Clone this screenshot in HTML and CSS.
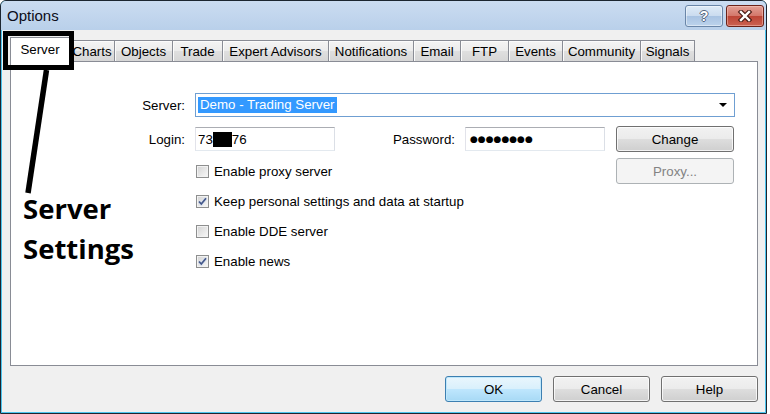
FILE: index.html
```html
<!DOCTYPE html>
<html>
<head>
<meta charset="utf-8">
<title>Options</title>
<link rel="stylesheet" href="styles.css">
</head>
<body>
<div class="window">
  <div class="titlebar">
    <span class="title">Options</span>
    <div class="caption-buttons">
      <div class="cap-btn cap-help"><span class="cap-q">?</span></div>
      <div class="cap-btn cap-close">
        <svg width="16" height="12" viewBox="0 0 16 12">
          <path d="M4 2 L12 10 M12 2 L4 10" stroke="#4a1c16" stroke-width="4.6" stroke-linecap="square" fill="none"/>
          <path d="M4 2 L12 10 M12 2 L4 10" stroke="#ffffff" stroke-width="2.4" stroke-linecap="square" fill="none"/>
        </svg>
      </div>
    </div>
  </div>
  <div class="client">
    <div class="tabs">
      <div class="tab tab-active">Server</div>
      <div class="tab tab-charts">Charts</div>
      <div class="tab tab-objects">Objects</div>
      <div class="tab tab-trade">Trade</div>
      <div class="tab tab-expert">Expert Advisors</div>
      <div class="tab tab-notif">Notifications</div>
      <div class="tab tab-email">Email</div>
      <div class="tab tab-ftp">FTP</div>
      <div class="tab tab-events">Events</div>
      <div class="tab tab-community">Community</div>
      <div class="tab tab-signals">Signals</div>
    </div>
    <div class="panel">
      <div class="row row-server">
        <span class="lbl">Server:</span>
        <div class="combo">
          <span class="combo-sel">Demo - Trading Server</span>
          <span class="combo-arrow"></span>
        </div>
      </div>
      <div class="row row-login">
        <span class="lbl">Login:</span>
        <div class="field">73<span class="redact"></span>76</div>
        <span class="lbl lbl-pw">Password:</span>
        <div class="field field-pw">●●●●●●●●</div>
        <div class="btn btn-change">Change</div>
      </div>
      <div class="row row-proxy">
        <div class="check check-proxy"><span class="box"></span><span>Enable proxy server</span></div>
        <div class="btn btn-disabled btn-proxy">Proxy...</div>
      </div>
      <div class="check-list">
        <div class="check"><span class="box"><svg class="tick" width="11" height="11" viewBox="0 0 11 11"><path d="M2 5.5 L4.3 8 L9 2.2" stroke="#d8e0ee" stroke-width="3.2" fill="none"/><path d="M2 5.5 L4.3 8 L9 2.2" stroke="#44588a" stroke-width="1.7" fill="none"/></svg></span><span>Keep personal settings and data at startup</span></div>
        <div class="check"><span class="box"></span><span>Enable DDE server</span></div>
        <div class="check"><span class="box"><svg class="tick" width="11" height="11" viewBox="0 0 11 11"><path d="M2 5.5 L4.3 8 L9 2.2" stroke="#d8e0ee" stroke-width="3.2" fill="none"/><path d="M2 5.5 L4.3 8 L9 2.2" stroke="#44588a" stroke-width="1.7" fill="none"/></svg></span><span>Enable news</span></div>
      </div>
    </div>
    <div class="footer">
      <div class="btn btn-default btn-foot">OK</div>
      <div class="btn btn-foot">Cancel</div>
      <div class="btn btn-foot">Help</div>
    </div>
  </div>
</div>
<svg class="annot" width="770" height="414" viewBox="0 0 770 414">
  <rect x="5.5" y="33.5" width="66" height="34" fill="none" stroke="#000" stroke-width="5"/>
  <line x1="46.5" y1="70" x2="28" y2="193" stroke="#000" stroke-width="5.5"/>
</svg>
<div class="annot-text">Server<br>Settings</div>
</body>
</html>
```

FILE: styles.css
```css
* { box-sizing: border-box; }
html, body { margin: 0; padding: 0; }
body {
  width: 770px;
  height: 414px;
  background: #ffffff;
  font-family: "Liberation Sans", Arial, sans-serif;
  font-size: 13.3px;
  color: #000;
  position: relative;
  overflow: hidden;
}

.window {
  width: 767px;
  height: 414px;
  border: 1px solid #1c2530;
  border-radius: 6px 6px 0 0;
  background: #4cc5ee;
  display: flex;
  flex-direction: column;
  overflow: hidden;
}

.titlebar {
  height: 29px;
  flex: none;
  background: linear-gradient(#cbdcf1, #b9d0ea);
  display: flex;
  justify-content: space-between;
  align-items: flex-start;
  padding: 0 2px 0 6px;
}
.title {
  font-size: 15px;
  line-height: 18px;
  margin-top: 6px;
  color: #0b0b18;
}
.caption-buttons {
  display: flex;
  gap: 3px;
  margin-top: 4px;
}
.cap-btn {
  width: 38px;
  height: 22px;
  border-radius: 3px;
  display: flex;
  align-items: center;
  justify-content: center;
}
.cap-help {
  border: 1px solid #6a86a8;
  background: linear-gradient(#dfebf7 0%, #cbdcef 48%, #a9c3e2 52%, #bcd3ec 100%);
  box-shadow: inset 0 0 0 1px rgba(255,255,255,0.45);
}
.cap-q {
  font-weight: bold;
  font-size: 14px;
  line-height: 16px;
  color: #fff;
  text-shadow: 1px 0 0 #56667e, -1px 0 0 #56667e, 0 1px 0 #56667e, 0 -1px 0 #56667e;
}
.cap-close {
  border: 1px solid #6b2219;
  background: linear-gradient(#e2a096 0%, #d4786b 48%, #bd4536 52%, #cb6252 100%);
  box-shadow: inset 0 0 0 1px rgba(255,210,200,0.45);
}

.client {
  flex: 1;
  margin: 0 1px 1px 1px;
  background: #f0f0f0;
  padding: 7px 7px 0 8px;
}

.tabs {
  display: flex;
  align-items: flex-end;
  height: 24px;
  position: relative;
  z-index: 2;
}
.tab {
  height: 21px;
  border: 1px solid #898c95;
  border-right: none;
  border-bottom: none;
  background: linear-gradient(#f4f4f4 0%, #ececec 48%, #dfdfdf 52%, #d6d6d6 100%);
  box-shadow: inset 1px 1px 0 #fbfbfb;
  display: flex;
  align-items: center;
  justify-content: center;
  white-space: nowrap;
  flex: none;
}
.tab-active {
  width: 60px;
  height: 25px;
  margin-bottom: -1px;
  margin-right: -1px;
  border-right: 1px solid #898c95;
  background: #fff;
  box-shadow: none;
  position: relative;
  z-index: 3;
  padding-bottom: 1px;
}
.tab-charts { width: 45px; }
.tab-objects { width: 58px; }
.tab-trade { width: 50px; }
.tab-expert { width: 106px; }
.tab-notif { width: 85px; }
.tab-email { width: 47px; }
.tab-ftp { width: 48px; }
.tab-events { width: 54px; }
.tab-community { width: 78px; }
.tab-signals { width: 55px; border-right: 1px solid #898c95; }

.panel {
  height: 305px;
  border: 1px solid #898c95;
  background: #fff;
  position: relative;
  z-index: 1;
  padding-top: 31px;
}

.row {
  display: flex;
  align-items: center;
}
.row-server { height: 24px; }
.lbl {
  width: 174px;
  flex: none;
  text-align: right;
}
.combo {
  margin-left: 10px;
  width: 540px;
  height: 24px;
  border: 1px solid #6f9fd2;
  background: #fff;
  display: flex;
  align-items: center;
  padding-left: 2px;
  position: relative;
}
.combo-sel {
  background: #3399ff;
  color: #fff;
  line-height: 16px;
  padding: 0 2px 0 2px;
}
.combo-arrow {
  position: absolute;
  right: 7px;
  top: 9px;
  width: 0;
  height: 0;
  border-left: 4px solid transparent;
  border-right: 4px solid transparent;
  border-top: 4px solid #000;
}

.row-login {
  margin-top: 9px;
  height: 26px;
}
.field {
  margin-left: 10px;
  width: 140px;
  height: 24px;
  flex: none;
  border: 1px solid;
  border-color: #abadb3 #dbdfe6 #e3e9ef #e2e3ea;
  background: #fff;
  padding-left: 2px;
  display: flex;
  align-items: center;
}
.redact {
  display: inline-block;
  width: 19px;
  height: 15px;
  background: #000;
}
.lbl-pw { width: 120px; }
.field-pw {
  font-family: "DejaVu Sans", sans-serif;
  font-size: 9px;
  padding-left: 4px;
}

.btn {
  height: 26px;
  border: 1px solid #707070;
  border-radius: 3px;
  background: linear-gradient(#f2f2f2 0%, #ebebeb 48%, #dddddd 52%, #cfcfcf 100%);
  box-shadow: inset 0 0 0 1px rgba(255,255,255,0.75);
  display: flex;
  align-items: center;
  justify-content: center;
  flex: none;
}
.btn-change {
  margin-left: 11px;
  width: 118px;
}
.btn-disabled {
  border-color: #adb2b5;
  background: #f4f4f4;
  box-shadow: none;
  color: #838383;
}
.btn-default {
  border-color: #3c7fb1;
  background: linear-gradient(#eaf6fd 0%, #d9f0fc 48%, #bee6fd 52%, #a7d9f5 100%);
  box-shadow: inset 0 0 0 1px #bfe7fb;
}

.row-proxy {
  margin-top: 6px;
  height: 26px;
  padding-left: 185px;
}
.check-proxy { width: 420px; }
.btn-proxy { width: 118px; }

.check {
  display: flex;
  align-items: center;
  gap: 5px;
  height: 20px;
}
.box {
  width: 13px;
  height: 13px;
  flex: none;
  border: 1px solid #8e8f8f;
  background: linear-gradient(135deg, #d2d2d2 0%, #e6e6e6 50%, #f8f8f8 100%);
  box-shadow: inset 0 0 0 1px #f2f2f2;
  display: flex;
  align-items: center;
  justify-content: center;
}
.tick { display: block; }

.check-list {
  padding-left: 185px;
  margin-top: 7px;
  display: flex;
  flex-direction: column;
  gap: 10px;
}

.footer {
  display: flex;
  justify-content: flex-end;
  gap: 11px;
  margin-top: 10px;
}
.btn-foot { width: 97px; }

.annot {
  position: absolute;
  left: 0;
  top: 0;
  pointer-events: none;
  z-index: 10;
}
.annot-text {
  position: absolute;
  left: 23px;
  top: 189px;
  font-family: "Open Sans", sans-serif;
  font-weight: 700;
  font-size: 27.5px;
  line-height: 40px;
  color: #000;
  z-index: 11;
}
```
